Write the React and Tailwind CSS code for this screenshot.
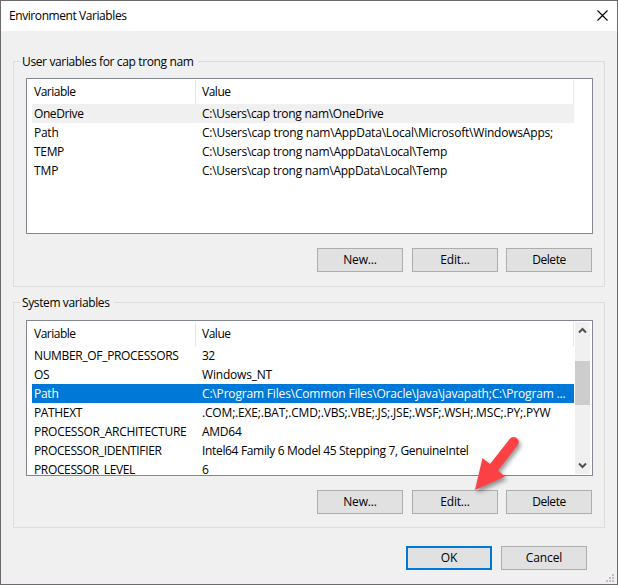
import { useLayoutEffect, useRef } from "react";

// A run of text whose tracking is adjusted so that it spans `w` pixels.
function Label({ children, w, className = "" }) {
  const ref = useRef(null);
  useLayoutEffect(() => {
    const el = ref.current;
    el.style.letterSpacing = "0px";
    const natural = el.getBoundingClientRect().width;
    el.style.letterSpacing = `${(w - natural) / children.length}px`;
  }, [children, w]);
  return (
    <span ref={ref} className={`inline-block whitespace-pre ${className}`}>
      {children}
    </span>
  );
}

const userRows = [
  ["OneDrive", 49.5, "C:\\Users\\cap trong nam\\OneDrive", 181.5],
  ["Path", 24.5, "C:\\Users\\cap trong nam\\AppData\\Local\\Microsoft\\WindowsApps;", 351],
  ["TEMP", 30, "C:\\Users\\cap trong nam\\AppData\\Local\\Temp", 245],
  ["TMP", 24.5, "C:\\Users\\cap trong nam\\AppData\\Local\\Temp", 245],
];

const systemRows = [
  ["NUMBER_OF_PROCESSORS", 144.5, "32", 12.5],
  ["OS", 15.5, "Windows_NT", 70],
  ["Path", 24.5, "C:\\Program Files\\Common Files\\Oracle\\Java\\javapath;C:\\Program ...", 363.5],
  ["PATHEXT", 48, ".COM;.EXE;.BAT;.CMD;.VBS;.VBE;.JS;.JSE;.WSF;.WSH;.MSC;.PY;.PYW", 348.5],
  ["PROCESSOR_ARCHITECTURE", 152.5, "AMD64", 39.5],
  ["PROCESSOR_IDENTIFIER", 127.5, "Intel64 Family 6 Model 45 Stepping 7, GenuineIntel", 266.5],
  ["PROCESSOR_LEVEL", 101, "6", 7],
];

function Button({ children, w, primary }) {
  return (
    <button
      className={`flex h-6 w-[86px] items-center justify-center bg-[#e1e1e1] ${
        primary ? "border-2 border-[#0078d7]" : "border border-[#adadad]"
      }`}
    >
      <Label w={w}>{children}</Label>
    </button>
  );
}

function VariableList({ rows, selected, selectedClass, scroll }) {
  return (
    <div className="mr-[11px] ml-3 flex h-[156px] overflow-hidden border border-[#828790] bg-white pl-[5px]">
      <div className="w-[542px] shrink-0">
        <div className="flex h-[25px] pt-px">
          <div className="h-6 w-[164px] border-r border-[#e5e5e5] pl-0.5 leading-6">
            <Label w={41.5}>Variable</Label>
          </div>
          <div className="h-6 flex-1 border-r border-[#e5e5e5] pl-1.5 leading-6">
            <Label w={28.5}>Value</Label>
          </div>
        </div>
        {rows.map(([name, nameWidth, value, valueWidth], i) => (
          <div key={name} className={`flex h-[19px] leading-[19px] ${i === selected ? selectedClass : ""}`}>
            <div className="w-[164px] shrink-0 pl-0.5">
              <Label w={nameWidth}>{name}</Label>
            </div>
            <div className="pl-1.5">
              <Label w={valueWidth}>{value}</Label>
            </div>
          </div>
        ))}
      </div>
      {scroll && (
        <div className="mt-px ml-px flex h-[152px] w-[15px] flex-col items-center bg-[#f0f0f0]">
          <Chevron className="mt-[5px]" />
          <div className="mt-[27px] h-11 w-[15px] bg-[#cdcdcd]" />
          <Chevron className="mt-auto mb-[5px] rotate-180" />
        </div>
      )}
    </div>
  );
}

function Chevron({ className }) {
  return (
    <svg width="9" height="7" viewBox="0 0 9 7" className={`shrink-0 ${className}`}>
      <path d="M1 5.5 4.5 2 8 5.5" fill="none" stroke="#505050" strokeWidth="2" />
    </svg>
  );
}

function Group({ title, titleWidth, children }) {
  return (
    <section className="h-[226px] border border-[#dcdcdc]">
      <div className="flex h-4">
        <h2 className="-mt-2 ml-1.5 h-4 bg-[#f0f0f0] pr-1 pl-0.5 leading-4">
          <Label w={titleWidth}>{title}</Label>
        </h2>
      </div>
      {children}
    </section>
  );
}

function Actions() {
  return (
    <div className="mt-3.5 flex justify-end pr-3">
      <Button w={33.5}>New...</Button>
      <div className="w-[9px]" />
      <Button w={29.5}>Edit...</Button>
      <div className="w-2" />
      <Button w={33.5}>Delete</Button>
    </div>
  );
}

function Arrow() {
  return (
    <svg
      className="absolute top-[424px] left-[459px] drop-shadow-[2px_3px_2px_rgba(0,0,0,0.4)]"
      width="70"
      height="75"
      viewBox="0 0 70 75"
    >
      <path
        d="M15 65 22.5 33 30 39 49.5 14.2C51 12 54 11.2 56.2 12.7C59 14.5 59.5 17.5 57.6 20L38 45.5 45 51.5Z"
        fill="#fc4145"
      />
    </svg>
  );
}

function Grip() {
  return (
    <svg className="absolute right-[3px] bottom-[2px]" width="8" height="8" viewBox="0 0 8 8" fill="#bfbfbf">
      <path d="M6 0h2v2H6zM3 3h2v2H3zM6 3h2v2H6zM0 6h2v2H0zM3 6h2v2H3zM6 6h2v2H6z" />
    </svg>
  );
}

export default function App() {
  return (
    <div className="relative h-[585px] w-[618px] overflow-hidden border border-[#6b696b] bg-[#f0f0f0] font-['Open_Sans','Noto_Sans',sans-serif] text-[12px] text-black">
      <header className="flex h-[30px] items-center justify-between bg-white pr-[9px] pl-2">
        <Label w={117.5}>Environment Variables</Label>
        <svg width="11" height="11" viewBox="0 0 11 11" className="-mt-px">
          <path d="M.5 .5 10.5 10.5M10.5 .5 .5 10.5" stroke="#000" strokeWidth="1.1" />
        </svg>
      </header>
      <main className="flex flex-col gap-[15px] px-3 pt-[30px]">
        <Group title="User variables for cap trong nam" titleWidth={171.5}>
          <VariableList rows={userRows} selected={0} selectedClass="bg-[#f0f0f0]" />
          <Actions />
        </Group>
        <Group title="System variables" titleWidth={87.5}>
          <div className="mt-px mb-px">
            <VariableList rows={systemRows} selected={2} selectedClass="bg-[#0078d7] text-white" scroll />
          </div>
          <Actions />
        </Group>
      </main>
      <footer className="mt-[18px] flex justify-end gap-[9px] pr-[30px]">
        <Button w={16.5} primary>OK</Button>
        <Button w={36.5}>Cancel</Button>
      </footer>
      <Arrow />
      <Grip />
    </div>
  );
}
